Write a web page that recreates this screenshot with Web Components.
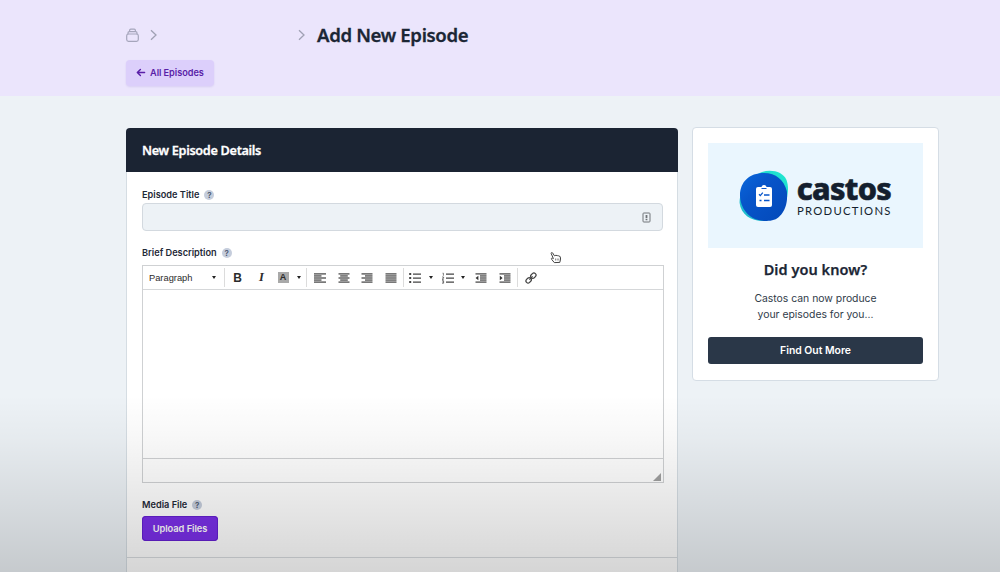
<!DOCTYPE html>
<html lang="en">
<head>
<meta charset="UTF-8">
<title>Add New Episode</title>
<style>
  html, body { margin: 0; height: 100%; overflow: hidden; }
  body {
    background: #edf2f6;
    color: #1b2635;
    font-family: Inter, "Liberation Sans", sans-serif;
  }
</style>
</head>
<body>
<episode-page>
  <page-header slot="header" heading="Add New Episode" back="All Episodes"></page-header>
  <details-card heading="New Episode Details">
    <form-field label="Episode Title"><title-input></title-input></form-field>
    <form-field label="Brief Description" style="margin-top: 15px"><text-editor></text-editor></form-field>
    <form-field label="Media File" style="margin-top: 15px"><upload-button>Upload Files</upload-button></form-field>
  </details-card>
  <promo-card slot="aside" heading="Did you know?" action="Find Out More">Castos can now produce<br>your episodes for you...</promo-card>
</episode-page>

<script>
class EpisodePage extends HTMLElement {
  connectedCallback() {
    this.attachShadow({ mode: 'open' });
    this.shadowRoot.innerHTML = `
      <style>
        :host {
          display: block;
          position: relative;
          height: 572px;
          overflow: hidden;
        }
        main {
          display: flex;
          align-items: flex-start;
          gap: 14px;
          padding: 31px 0 0 126px;
        }
        .shade {
          position: absolute;
          inset: 395px 0 0 0;
          background: linear-gradient(rgba(0,0,0,0), rgba(0,0,0,.03) 25%, rgba(0,0,0,.1) 65%, rgba(0,0,0,.165));
          pointer-events: none;
        }
        .pointer {
          position: absolute;
          left: 550px;
          top: 251px;
        }
      </style>
      <slot name="header"></slot>
      <main>
        <slot></slot>
        <slot name="aside"></slot>
      </main>
      <div class="shade"></div>
      <svg class="pointer" width="12" height="13" viewBox="0 0 12 13" fill="#fff" stroke="#444" stroke-width="1" stroke-linejoin="round">
        <path d="M4.3 11.6 1.600 8.300c-.7-1 .4-1.600 1.100-1L3.400 7.600 1.200 2.600c-.4-1.100 1-1.600 1.500-.6L4.400 4.800l1.500-.5 1.400.3 1.300.2 1.600.8.4 2.500-.8 3.300z"/>
        <path d="M5.500 7.500v2M7.200 7.500v2M8.800 7.500v2" stroke-width=".6"/>
      </svg>
    `;
  }
}
customElements.define('episode-page', EpisodePage);

class PageHeader extends HTMLElement {
  connectedCallback() {
    this.attachShadow({ mode: 'open' });
    this.shadowRoot.innerHTML = `
      <style>
        :host {
          display: block;
          box-sizing: border-box;
          height: 96px;
          padding: 22px 0 0 126px;
          background: #ebe5fc;
        }
        nav { display: flex; align-items: center; height: 26px; }
        svg { display: block; fill: none; }
        .gap { width: 139px; }
        h1 {
          margin: 0 0 0 11px;
          font: 600 18.6px/26px "Noto Sans", sans-serif;
          letter-spacing: -0.35px;
          -webkit-text-stroke: .3px;
        }
        a {
          display: flex;
          align-items: center;
          box-sizing: border-box;
          width: 88px;
          height: 26px;
          margin-top: 12px;
          padding: 0 0 1px 10px;
          gap: 4px;
          border-radius: 4px;
          background: #dccffb;
          box-shadow: 0 1px 2px rgba(90, 50, 180, .12);
          color: #5a1fa8;
          font-size: 9.2px;
          font-weight: 600;
          letter-spacing: -0.05px;
          white-space: nowrap;
        }
      </style>
      <nav>
        <svg width="13" height="14" viewBox="0 0 13 14" stroke="#a5a5bb" stroke-width="1.2" stroke-linecap="round">
          <rect x=".7" y="6" width="11.6" height="7.3" rx="1.8"/>
          <path d="M2 5.8V5c0-.8.6-1.4 1.3-1.4h6.4c.7 0 1.3.6 1.3 1.4v.8M3.6 3.5v-1c0-.9.5-1.4 1.2-1.4h3.4c.7 0 1.2.5 1.2 1.4v1"/>
        </svg>
        <svg style="margin-left:10px" width="9" height="12" viewBox="0 0 9 12" stroke="#a0a1b4" stroke-width="1.3"><path d="m2 1.2 5 4.8-5 4.8"/></svg>
        <span class="gap"></span>
        <svg width="9" height="12" viewBox="0 0 9 12" stroke="#a0a1b4" stroke-width="1.3"><path d="m2 1.2 5 4.8-5 4.8"/></svg>
        <h1>${this.getAttribute('heading')}</h1>
      </nav>
      <a>
        <svg width="10" height="9" viewBox="0 0 10 9" stroke="#5a1fa8" stroke-width="1.4" stroke-linecap="round" stroke-linejoin="round"><path d="M8.6 4.5H1.4M4.4 1.4 1.3 4.5l3.1 3.1"/></svg>
        ${this.getAttribute('back')}
      </a>
    `;
  }
}
customElements.define('page-header', PageHeader);

class DetailsCard extends HTMLElement {
  connectedCallback() {
    this.attachShadow({ mode: 'open' });
    this.shadowRoot.innerHTML = `
      <style>
        :host {
          display: block;
          box-sizing: border-box;
          width: 552px;
          height: 480px;
          margin-top: 1px;
          border: 1px solid #d5dde3;
          border-top: 0;
          border-radius: 4px 4px 0 0;
          background: #fff;
        }
        h2 {
          height: 44px;
          margin: 0 -1px;
          padding-left: 16px;
          border-radius: 4px 4px 0 0;
          background: #1b2433;
          color: #fff;
          font: 600 12.7px/44px "Noto Sans", sans-serif;
          letter-spacing: -0.32px;
          -webkit-text-stroke: .3px;
        }
        .fields {
          box-sizing: border-box;
          height: 386px;
          padding: 16px 14px 0 15px;
          border-bottom: 1px solid #d8dcdf;
        }
      </style>
      <h2>${this.getAttribute('heading')}</h2>
      <div class="fields"><slot></slot></div>
    `;
  }
}
customElements.define('details-card', DetailsCard);

class FormField extends HTMLElement {
  connectedCallback() {
    this.attachShadow({ mode: 'open' });
    this.shadowRoot.innerHTML = `
      <style>
        :host { display: block; }
        label {
          display: flex;
          align-items: center;
          gap: 5px;
          height: 13px;
          margin-bottom: 3px;
          font-size: 9.2px;
          font-weight: 600;
          color: #1f2937;
        }
        .help {
          width: 10px;
          height: 10px;
          border-radius: 50%;
          background: #c5cddc;
          color: #4a5870;
          font-size: 8px;
          line-height: 10px;
          text-align: center;
        }
      </style>
      <label>${this.getAttribute('label')}<span class="help">?</span></label>
      <slot></slot>
    `;
  }
}
customElements.define('form-field', FormField);

class TitleInput extends HTMLElement {
  connectedCallback() {
    this.attachShadow({ mode: 'open' });
    this.shadowRoot.innerHTML = `
      <style>
        :host {
          display: flex;
          align-items: center;
          justify-content: flex-end;
          box-sizing: border-box;
          width: 521px;
          height: 28px;
          margin-top: -1px;
          padding-right: 11px;
          border: 1px solid #d3d9df;
          border-radius: 4px;
          background: #edf2f6;
        }
      </style>
      <svg width="9" height="11" viewBox="0 0 9 11" fill="none" stroke="#707478">
        <rect x="1" y="1" width="7" height="9" rx=".8"/>
        <path d="M4.5 3v3.200M4.500 7v1.200" stroke-width="1.800"/>
      </svg>
    `;
  }
}
customElements.define('title-input', TitleInput);

// toolbar glyphs, drawn on a 14x12 grid
const lines = (rows) => rows.map(([x, w], i) => `<path d="M${x} ${1.9 + i * 2.05}h${w}"/>`).join('');
const icons = {
  left: lines([[1, 12], [1, 7.5], [1, 12], [1, 7.5], [1, 12]]),
  center: lines([[1.5, 11], [3.2, 7.6], [1.5, 11], [3.2, 7.6], [1.5, 11]]),
  right: lines([[1.5, 11], [5, 7.5], [1.5, 11], [5, 7.5], [1.5, 11]]),
  justify: lines([[1.5, 11], [1.5, 11], [1.5, 11], [1.5, 11], [1.5, 11]]),
  bullets: '<path d="M5 2h8M5 6h8M5 10h8"/><path d="M1.2 2h2M1.2 6h2M1.2 10h2" stroke-width="2"/>',
  numbers: '<path d="M5 2h8M5 6h8M5 10h8"/><path d="M1.6 1.2h.8v2.5M1 5h1.6v1.2L1 7.3h1.8M1 8.7h1.6v2.5H1M1.4 10h1.2" stroke-width=".7"/>',
  outdent: lines([[1.5, 11], [6, 6.5], [6, 6.5], [6, 6.5], [1.5, 11]]) + '<path d="M4.4 3.7v4.6L1.6 6z" fill="#333" stroke="none"/>',
  indent: lines([[1.5, 11], [6, 6.5], [6, 6.5], [6, 6.5], [1.5, 11]]) + '<path d="M1.8 3.7v4.6L4.6 6z" fill="#333" stroke="none"/>',
  link: '<g transform="rotate(-45 7 6)"><rect x=".8" y="3.9" width="5.800" height="4.200" rx="2.1"/><rect x="7.4" y="3.9" width="5.800" height="4.200" rx="2.1"/><path d="M4.7 6h4.6"/></g>'
};

class ToolIcon extends HTMLElement {
  connectedCallback() {
    this.attachShadow({ mode: 'open' });
    this.shadowRoot.innerHTML = `
      <style>
        :host { display: flex; align-items: center; justify-content: center; flex: none; }
      </style>
      <svg width="14" height="12" viewBox="0 0 14 12" fill="none" stroke="#444" stroke-width="1.25">${icons[this.getAttribute('name')]}</svg>
    `;
  }
}
customElements.define('tool-icon', ToolIcon);

class TextEditor extends HTMLElement {
  connectedCallback() {
    this.attachShadow({ mode: 'open' });
    this.shadowRoot.innerHTML = `
      <style>
        :host {
          display: flex;
          flex-direction: column;
          box-sizing: border-box;
          width: 522px;
          height: 218px;
          margin-top: 6px;
          border: 1px solid #cfd1d3;
          background: #fff;
        }
        .toolbar {
          display: flex;
          align-items: center;
          height: 23px;
          border-bottom: 1px solid #d5d7d9;
          color: #2b2b2b;
        }
        .toolbar > * { flex: none; }
        .format {
          display: flex;
          align-items: center;
          justify-content: space-between;
          box-sizing: border-box;
          width: 81px;
          padding: 0 8px 0 6px;
          font: 9.3px "Liberation Sans", sans-serif;
        }
        .sep { width: 1px; height: 19px; background: #dcdcdc; }
        .caret { display: flex; justify-content: center; }
        .caret::before, .format::after {
          content: '';
          border: 2.5px solid transparent;
          border-top: 3px solid #222;
          border-bottom: 0;
        }
        .caret::before { margin-right: 2px; }
        b { width: 25px; text-align: center; font: bold 12px "Liberation Sans", sans-serif; }
        i { width: 23px; text-align: center; font: italic bold 12.5px "Liberation Serif", serif; }
        .color { display: flex; justify-content: center; width: 20px; }
        .color span {
          width: 11px;
          height: 11px;
          background: #a9a9a9;
          font: bold 9px/11px "Liberation Sans", sans-serif;
          text-align: center;
        }
        .body { flex: 1; }
        .status {
          display: flex;
          align-items: flex-end;
          justify-content: flex-end;
          box-sizing: border-box;
          height: 24px;
          padding: 0 2px 1px 0;
          border-top: 1px solid #cfd1d3;
        }
      </style>
      <div class="toolbar">
        <div class="format">Paragraph</div>
        <span class="sep"></span>
        <b>B</b><i>I</i>
        <div class="color"><span>A</span></div>
        <span class="caret" style="width:13px"></span>
        <span class="sep"></span>
        <tool-icon name="left" style="width:25px"></tool-icon>
        <tool-icon name="center" style="width:23px"></tool-icon>
        <tool-icon name="right" style="width:23px"></tool-icon>
        <tool-icon name="justify" style="width:25px"></tool-icon>
        <span class="sep"></span>
        <tool-icon name="bullets" style="width:22px"></tool-icon>
        <span class="caret" style="width:11px"></span>
        <tool-icon name="numbers" style="width:21px"></tool-icon>
        <span class="caret" style="width:11px"></span>
        <tool-icon name="outdent" style="width:23px"></tool-icon>
        <tool-icon name="indent" style="width:25px"></tool-icon>
        <span class="sep"></span>
        <tool-icon name="link" style="width:26px"></tool-icon>
      </div>
      <div class="body"></div>
      <div class="status">
        <svg width="8" height="8" viewBox="0 0 8 8" fill="#a0a0a0"><path d="M8 0v8H0z"/></svg>
      </div>
    `;
  }
}
customElements.define('text-editor', TextEditor);

class UploadButton extends HTMLElement {
  connectedCallback() {
    this.attachShadow({ mode: 'open' });
    this.shadowRoot.innerHTML = `
      <style>
        :host {
          display: flex;
          align-items: center;
          justify-content: center;
          width: 76px;
          height: 25px;
          margin-top: 5px;
          border-radius: 4px;
          background: #7a2fe8;
          box-shadow: inset 0 0 0 1px #6420d0;
          color: #fff;
          font-size: 9.3px;
          font-weight: 600;
          letter-spacing: -0.05px;
        }
      </style>
      <slot></slot>
    `;
  }
}
customElements.define('upload-button', UploadButton);

class CastosBanner extends HTMLElement {
  connectedCallback() {
    this.attachShadow({ mode: 'open' });
    this.shadowRoot.innerHTML = `
      <style>
        :host {
          display: flex;
          align-items: center;
          gap: 7px;
          box-sizing: border-box;
          width: 215px;
          height: 105px;
          padding-left: 31px;
          background: #eaf6fe;
          color: #141f2e;
        }
        svg { flex: none; }
        .name {
          height: 31px;
          font: 800 30.5px/28px "Noto Sans", sans-serif;
          letter-spacing: -0.7px;
          -webkit-text-stroke: .6px;
        }
        .sub {
          padding-left: 1px;
          font: 11.3px/12px Lato, sans-serif;
          letter-spacing: 1.25px;
        }
      </style>
      <svg width="50" height="52" viewBox="0 0 50 52">
        <defs>
          <linearGradient id="blue" x1="0" y1="0" x2="1" y2="1">
            <stop offset="0" stop-color="#0868dc"/>
            <stop offset=".35" stop-color="#0755ca"/>
            <stop offset="1" stop-color="#0348b8"/>
          </linearGradient>
          <linearGradient id="teal" x1="1" y1="0" x2="0" y2="1">
            <stop offset="0" stop-color="#20ead0"/>
            <stop offset="1" stop-color="#20b5cc"/>
          </linearGradient>
        </defs>
        <path fill="url(#teal)" d="M23 2C33-1 44 2 47.500 10c3 8 1 18-2 25-4 9-11 15-21 16C11 51 2 44 .6 33 0 21 10 7 23 2z"/>
        <path fill="url(#blue)" d="M25 3c12 0 20 7 22.800 18 1.200 10-1 19-7 25-4 5-12 5.500-19 4.500C10 49 1 38 1 25 1.300 12 10 3 25 3z"/>
        <rect x="17" y="17" width="16" height="20" rx="2" fill="#fff"/>
        <circle cx="25" cy="17.500" r="2.500" fill="#fff"/>
        <path d="M22.500 18.500h5" stroke="#0755ca" stroke-width="1"/>
        <path d="m20 24.300 1.300 1.300 2.500-3M25 25h5.500M25 30.500h5.500M20.500 30.500h2" fill="none" stroke="#0755ca" stroke-width="1.300"/>
      </svg>
      <div>
        <div class="name">castos</div>
        <div class="sub">PRODUCTIONS</div>
      </div>
    `;
  }
}
customElements.define('castos-banner', CastosBanner);

class PromoCard extends HTMLElement {
  connectedCallback() {
    this.attachShadow({ mode: 'open' });
    this.shadowRoot.innerHTML = `
      <style>
        :host {
          display: block;
          box-sizing: border-box;
          width: 247px;
          height: 254px;
          padding: 15px;
          border: 1px solid #d5dde5;
          border-radius: 4px;
          background: #fff;
          text-align: center;
        }
        h3 {
          margin: 9px 0 0;
          font: 600 14.5px/24px "Noto Sans", sans-serif;
          letter-spacing: 0.05px;
          -webkit-text-stroke: .25px;
        }
        p {
          margin: 10px 0 0;
          color: #303b49;
          font-size: 10.4px;
          line-height: 16px;
        }
        .action {
          height: 27px;
          margin-top: 14px;
          border-radius: 3px;
          background: #2a3748;
          color: #fff;
          font-size: 10.4px;
          font-weight: 600;
          line-height: 28px;
        }
      </style>
      <castos-banner></castos-banner>
      <h3>${this.getAttribute('heading')}</h3>
      <p><slot></slot></p>
      <div class="action">${this.getAttribute('action')}</div>
    `;
  }
}
customElements.define('promo-card', PromoCard);
</script>
</body>
</html>
